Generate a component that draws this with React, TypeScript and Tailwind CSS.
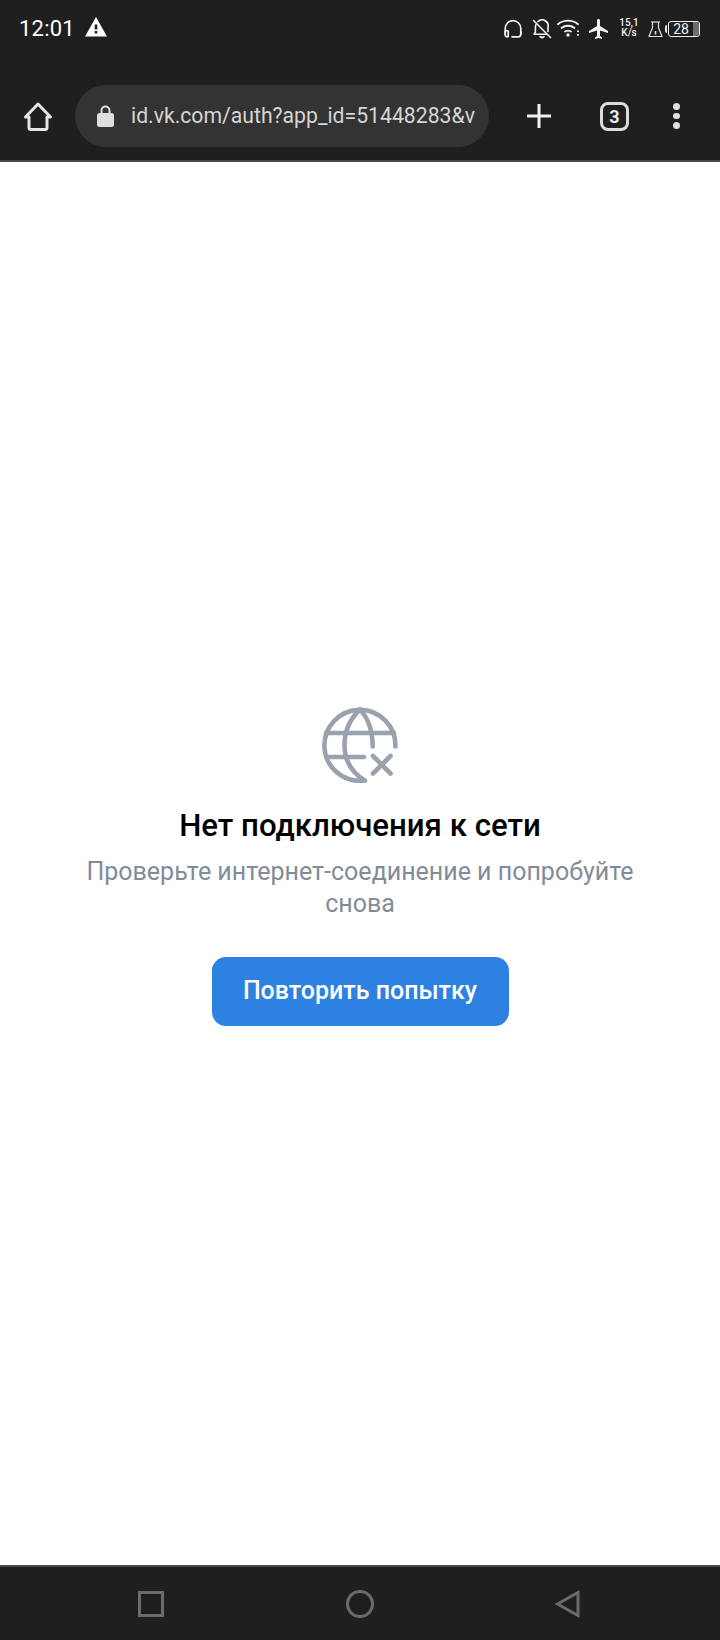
import React from 'react';

const font = { fontFamily: 'Roboto, "Noto Sans", sans-serif' };

const StatusIcons = () => (
  <div className="flex items-start pt-[18px]">
    {/* headset */}
    <svg className="w-[20px] h-[20px] mt-px" viewBox="0 0 20 20" fill="none" stroke="#f2f2f2" strokeWidth="1.7" strokeLinecap="round">
      <path d="M2.200 15V9.500a7.800 7.800 0 0 1 15.600 0V15" />
      <path d="M2.200 12.500v3.200a2 2 0 0 0 3 1.800V12a2.500 2.500 0 0 0-3 .500z" />
      <path d="M17.800 12.500v2.700a2.600 2.600 0 0 1-2.600 2.600H9" />
    </svg>
    {/* muted bell */}
    <svg className="w-[20px] h-[20px] ml-[9px] mt-px" viewBox="0 0 20 20" fill="none" stroke="#f2f2f2" strokeWidth="1.600" strokeLinecap="round" strokeLinejoin="round">
      <path d="M4 5.500c-.4.900-.6 1.800-.6 2.800v5L2 15.200h13" />
      <path d="M6 2.600A6 6 0 0 1 16 8.300v4.200" />
      <path d="M8 17.600a2.400 2.400 0 0 0 4 0" fill="#f2f2f2" />
      <path d="M1.500 1.500l17 17" />
    </svg>
    {/* wifi */}
    <svg className="w-[24px] h-[20px] ml-[5px]" viewBox="0 0 24 20" fill="none" stroke="#f2f2f2" strokeWidth="1.800" strokeLinecap="round">
      <path d="M1 6.200a16 16 0 0 1 20 0" />
      <path d="M4.500 10a10.500 10.500 0 0 1 13 0" />
      <path d="M8 13.600a5.500 5.500 0 0 1 6 0" />
      <circle cx="11" cy="17" r="1.700" fill="#f2f2f2" stroke="none" />
      <rect x="20" y="12.500" width="2" height="1.600" fill="#f2f2f2" stroke="none" />
      <rect x="20" y="16" width="2" height="1.600" fill="#f2f2f2" stroke="none" />
    </svg>
    {/* airplane */}
    <svg className="w-[24px] h-[24px] ml-[6px] -mt-[1px]" viewBox="0 0 24 24" fill="#f2f2f2">
      <path d="M21 16v-2l-8-5V3.500c0-.83-.67-1.500-1.500-1.500S10 2.670 10 3.500V9l-8 5v2l8-2.500V19l-2 1.500V22l3.500-1 3.500 1v-1.500L13 19v-5.500l8 2.500z" />
    </svg>
    {/* net speed */}
    <div className="w-[20px] ml-[8px] flex flex-col items-center text-[10px] leading-[10px] font-medium text-[#f2f2f2]">
      <span>15,1</span>
      <span>K/s</span>
    </div>
    {/* flask */}
    <svg className="w-[15px] h-[17px] ml-[9px] mt-[3px]" viewBox="0 0 15 17" fill="none" stroke="#e0e0e0" strokeWidth="1.200" strokeLinejoin="round">
      <path d="M3 1h9" />
      <path d="M4.500 1v5.700L1 15.500h13l-3.500-8.800V1" />
      <path d="M7.500 10v3.500" strokeWidth="1.600" />
    </svg>
    {/* battery */}
    <div className="ml-[2px] mt-[3px] flex items-center">
      <div className="w-[2px] h-[8px] bg-[#e8e8e8] rounded-l-sm mr-px" />
      <div className="relative w-[32px] h-[16px] border border-[#f0f0f0] rounded-[3px] flex items-center overflow-hidden">
        <div className="absolute right-0 top-0 bottom-0 w-[6px] bg-[#6e6e6e]" />
        <span className="relative w-[24px] text-center text-[14px] leading-none text-[#f2f2f2]">28</span>
      </div>
    </div>
  </div>
);

const Globe = () => (
  <svg className="w-[76px] h-[76px]" viewBox="0 0 76 76" fill="none" stroke="#99a2ad" strokeWidth="4.600" strokeLinecap="round" strokeLinejoin="round">
    <path d="M43 73.500A35.500 35.500 0 1 1 73.400 39.500" />
    <path d="M38 2.500C28 12 22.500 24.500 22.500 38S28 64 42 73" />
    <path d="M38 2.500C46 11 50.500 24 50.700 39.500" />
    <path d="M4 26h68" />
    <path d="M4.500 50h37.500" />
    <path d="M51 49l17.500 17.500M68.500 49L51 66.500" />
  </svg>
);

export default function App() {
  return (
    <div className="w-[720px] h-[1640px] bg-white flex flex-col" style={font}>
      {/* Status bar + browser toolbar */}
      <header className="h-[162px] flex-shrink-0 bg-[#1f1f1f] border-b-2 border-[#4a4a4a] flex flex-col">
        <div className="h-[85px] flex justify-between pl-[19px] pr-[20px]">
          <div className="flex items-start pt-[16px]">
            <span className="text-[22px] leading-[26px] font-normal text-white tracking-[0.2px]">12:01</span>
            <svg className="w-[24px] h-[24px] ml-[9px] -mt-[1px]" viewBox="0 0 24 24" fill="#fff">
              <path d="M1 21.500h22L12 2 1 21.500zm12.300-3h-2.600v-2.600h2.600v2.600zm0-4h-2.600V9.500h2.600v5z" />
            </svg>
          </div>
          <StatusIcons />
        </div>
        <div className="h-[62px] flex items-center">
          <div className="w-[75px] flex justify-center">
            <svg className="w-[30px] h-[30px]" viewBox="0 0 30 30" fill="none" stroke="#e6e6e6" strokeWidth="3" strokeLinejoin="round">
              <path d="M2.500 16L15 3l12.500 13H24v10.500a2 2 0 0 1-2 2H8a2 2 0 0 1-2-2V16H2.500z" />
            </svg>
          </div>
          <div className="w-[414px] h-[62px] rounded-full bg-[#333333] flex items-center pl-[21px] pr-[10px]">
            <svg className="w-[19px] h-[24px] flex-shrink-0" viewBox="0 0 19 24">
              <path d="M5.500 10V6.500a4 4 0 0 1 8 0V10" fill="none" stroke="#dedede" strokeWidth="2" />
              <rect x="1" y="9" width="17" height="14" rx="2.500" fill="#dedede" />
            </svg>
            <div className="ml-[16px] whitespace-nowrap text-[21.2px] leading-[28px] text-[#d6d6d6]">
              id.vk.com/auth?app_id=51448283&v
            </div>
          </div>
          {/* plus */}
          <svg className="w-[26px] h-[26px] ml-[37px]" viewBox="0 0 26 26" stroke="#f0f0f0" strokeWidth="3">
            <path d="M13 1v24M1 13h24" />
          </svg>
          <div className="ml-[48px] w-[29px] h-[29px] rounded-[8px] border-[3px] border-[#dcdcdc] flex items-center justify-center text-[18px] font-bold text-[#e8e8e8]">
            3
          </div>
          <div className="ml-[44px] flex flex-col gap-[3px]">
            <div className="w-[6.500px] h-[6.500px] rounded-full bg-[#e0e0e0]" />
            <div className="w-[6.500px] h-[6.500px] rounded-full bg-[#e0e0e0]" />
            <div className="w-[6.500px] h-[6.500px] rounded-full bg-[#e0e0e0]" />
          </div>
        </div>
      </header>

      {/* Offline placeholder */}
      <main className="flex-1 flex flex-col items-center justify-center pt-[5px]">
        <Globe />
        <h1 className="mt-[25px] text-[31.2px] leading-[36px] font-medium text-black">Нет подключения к сети</h1>
        <p className="mt-[12px] w-[600px] text-center text-[25px] leading-[32px] text-[#818c99]">
          Проверьте интернет-соединение и попробуйте снова
        </p>
        <button className="mt-[37px] w-[297px] h-[69px] rounded-[14px] bg-[#2d81e0] text-[25px] font-medium text-white">
          Повторить попытку
        </button>
      </main>

      {/* Android nav bar */}
      <footer className="h-[75px] flex-shrink-0 bg-[#1f1f1f] border-t-2 border-[#4a4a4a] flex items-center">
        <svg className="w-[28px] h-[28px] ml-[137px]" viewBox="0 0 28 28" fill="none" stroke="#6b6b6b" strokeWidth="3">
          <rect x="2.500" y="2.500" width="23" height="23" />
        </svg>
        <svg className="w-[30px] h-[30px] ml-[180px]" viewBox="0 0 30 30" fill="none" stroke="#6b6b6b" strokeWidth="3">
          <circle cx="15" cy="15" r="12.500" />
        </svg>
        <svg className="w-[26px] h-[30px] ml-[180px]" viewBox="0 0 26 30" fill="none" stroke="#6b6b6b" strokeWidth="3" strokeLinejoin="miter">
          <path d="M2.500 15L23 3.500v23L2.500 15z" />
        </svg>
      </footer>
    </div>
  );
}
